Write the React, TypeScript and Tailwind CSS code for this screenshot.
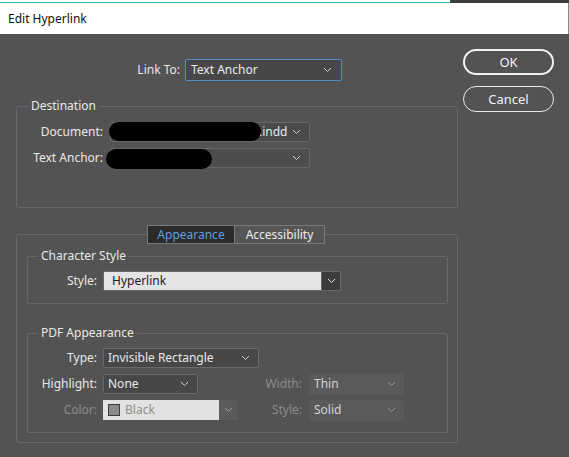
import React from "react";

const font = { fontFamily: '"Noto Sans", "Segoe UI", sans-serif' };

function Chevron({ className = "" }: { className?: string }) {
  return (
    <svg width="9" height="6" viewBox="0 0 9 6" className={className}>
      <polyline points="1,1 4.5,4.5 8,1" fill="none" stroke="currentColor" strokeWidth="1" />
    </svg>
  );
}

function DarkSelect({
  value,
  width,
  className = "",
}: {
  value: string;
  width: string;
  className?: string;
}) {
  return (
    <div
      className={`${width} h-[20px] flex items-center justify-between pl-[4px] pr-[8px] bg-[#474747] border border-[#6a6a6a] rounded-[2px] text-[#e8e8e8] ${className}`}
    >
      <span>{value}</span>
      <Chevron className="text-[#d0d0d0]" />
    </div>
  );
}

function MutedSelect({ value }: { value: string }) {
  return (
    <div className="w-[95px] h-[21px] flex items-center justify-between pl-[5px] pr-[8px] bg-[#5a5a5a] rounded-[2px] text-[#d4d4d4]">
      <span>{value}</span>
      <Chevron className="text-[#9a9a9a]" />
    </div>
  );
}

export default function App() {
  return (
    <div className="w-[569px] h-[457px] overflow-hidden bg-[#535353] text-[12px] leading-[16px]" style={font}>
      {/* window behind */}
      <div className="h-[3px] flex">
        <div className="w-[450px] bg-white border-b border-[#3cb4b4]" />
        <div className="flex-1 bg-[#3e3e3e]" />
      </div>
      {/* title bar */}
      <div className="h-[31px] bg-white flex items-center pl-[8px] text-[#111] border-r border-[#8a8a8a]">
        Edit Hyperlink
      </div>

      <div className="flex">
        <div className="w-[442px] ml-[16px]">
          {/* Link To */}
          <div className="mt-[25px] h-[22px] flex items-center">
            <span className="w-[164px] text-right text-[#e8e8e8]">Link To:</span>
            <div className="ml-[5px] w-[157px] h-[22px] flex items-center justify-between pl-[5px] pr-[9px] bg-[#474747] border border-[#4f8ccb] rounded-[2px] text-[#ececec]">
              <span>Text Anchor</span>
              <Chevron className="text-[#d0d0d0]" />
            </div>
          </div>

          {/* Destination */}
          <fieldset className="mt-[17px] border border-[#686868] rounded-[2px]">
            <legend className="ml-[11px] px-[3px] text-[#e8e8e8]">Destination</legend>
            <div className="pt-[8px] pb-[39px] flex flex-col gap-[6px]">
              <div className="flex items-center h-[20px]">
                <span className="w-[86px] text-right text-[#e8e8e8]">Document:</span>
                <div className="relative ml-[7px] w-[200px] h-[20px] flex items-center justify-between pl-[148px] pr-[8px] bg-[#4a4a4a] border border-[#676767] rounded-[2px] text-[#e8e8e8]">
                  <span>.indd</span>
                  <Chevron className="text-[#d0d0d0]" />
                  <div className="absolute left-[-2px] top-[-1px] w-[152px] h-[19px] bg-black rounded-[10px]" />
                </div>
              </div>
              <div className="flex items-center h-[20px]">
                <span className="w-[86px] text-right text-[#e8e8e8]">Text Anchor:</span>
                <div className="relative ml-[7px] w-[200px] h-[20px] flex items-center justify-end pr-[8px] bg-[#4d4d4d] border border-[#676767] rounded-[2px]">
                  <Chevron className="text-[#d0d0d0]" />
                  <div className="absolute left-[-5px] top-[0px] w-[106px] h-[20px] bg-black rounded-[10px]" />
                </div>
              </div>
            </div>
          </fieldset>

          {/* Tabs panel */}
          <fieldset className="mt-[17px] border border-[#686868] rounded-[2px]">
            <legend className="ml-[130px] flex h-[19px]">
              <span className="w-[88px] flex items-center justify-center bg-[#2b2b2b] border border-[#7a7a7a] text-[#5b9fe3]">
                Appearance
              </span>
              <span className="w-[90px] flex items-center justify-center bg-[#555555] border border-l-0 border-[#7a7a7a] text-[#ececec]">
                Accessibility
              </span>
            </legend>
            <div className="pt-[4px] pb-[9px] pl-[10px] pr-[9px]">
              <fieldset className="border border-[#686868] rounded-[2px]">
                <legend className="ml-[10px] px-[3px] text-[#e8e8e8]">Character Style</legend>
                <div className="pt-[7px] pb-[12px] flex items-center h-[20px] box-content">
                  <span className="w-[69px] text-right text-[#e8e8e8]">Style:</span>
                  <div className="ml-[6px] w-[238px] h-[20px] flex border border-[#6a6a6a] rounded-[2px]">
                    <div className="flex-1 bg-[#e4e4e4] flex items-center pl-[8px] text-[#1c1c1c]">Hyperlink</div>
                    <div className="w-[19px] bg-[#3c3c3c] border-l border-[#6a6a6a] flex items-center justify-center text-[#e0e0e0]">
                      <Chevron />
                    </div>
                  </div>
                </div>
              </fieldset>

              <fieldset className="mt-[21px] border border-[#686868] rounded-[2px]">
                <legend className="ml-[10px] px-[3px] text-[#e8e8e8]">PDF Appearance</legend>
                <div className="pt-[7px] pb-[12px] flex flex-col gap-[6px]">
                  <div className="flex items-center h-[20px]">
                    <span className="w-[69px] text-right text-[#e8e8e8]">Type:</span>
                    <DarkSelect value="Invisible Rectangle" width="w-[156px]" className="ml-[6px]" />
                  </div>
                  <div className="flex items-center h-[20px]">
                    <div className="w-[216px] flex items-center">
                      <span className="w-[69px] text-right text-[#e8e8e8]">Highlight:</span>
                      <DarkSelect value="None" width="w-[95px]" className="ml-[6px]" />
                    </div>
                    <span className="w-[58px] text-right text-[#8c8c8c]">Width:</span>
                    <div className="ml-[7px]">
                      <MutedSelect value="Thin" />
                    </div>
                  </div>
                  <div className="flex items-center h-[20px]">
                    <div className="w-[216px] flex items-center">
                      <span className="w-[69px] text-right text-[#8c8c8c]">Color:</span>
                      <div className="ml-[6px] w-[135px] h-[20px] flex">
                        <div className="w-[116px] bg-[#e2e2e2] flex items-center pl-[5px] gap-[5px] text-[#8e8e8e]">
                          <span className="w-[12px] h-[12px] bg-[#8a8a8a] border border-[#3a3a3a]" />
                          <span>Black</span>
                        </div>
                        <div className="flex-1 bg-[#5b5b5b] flex items-center justify-center text-[#9a9a9a]">
                          <Chevron />
                        </div>
                      </div>
                    </div>
                    <span className="w-[58px] text-right text-[#8c8c8c]">Style:</span>
                    <div className="ml-[7px]">
                      <MutedSelect value="Solid" />
                    </div>
                  </div>
                </div>
              </fieldset>
            </div>
          </fieldset>
        </div>

        {/* buttons */}
        <div className="ml-[5px] pt-[15px] flex flex-col gap-[11px]">
          <button className="w-[91px] h-[26px] rounded-full border-2 border-[#f2f2f2] text-[#f2f2f2] text-[13px]">
            OK
          </button>
          <button className="w-[91px] h-[26px] rounded-full border border-[#e8e8e8] text-[#f2f2f2] text-[13px]">
            Cancel
          </button>
        </div>
      </div>
    </div>
  );
}
